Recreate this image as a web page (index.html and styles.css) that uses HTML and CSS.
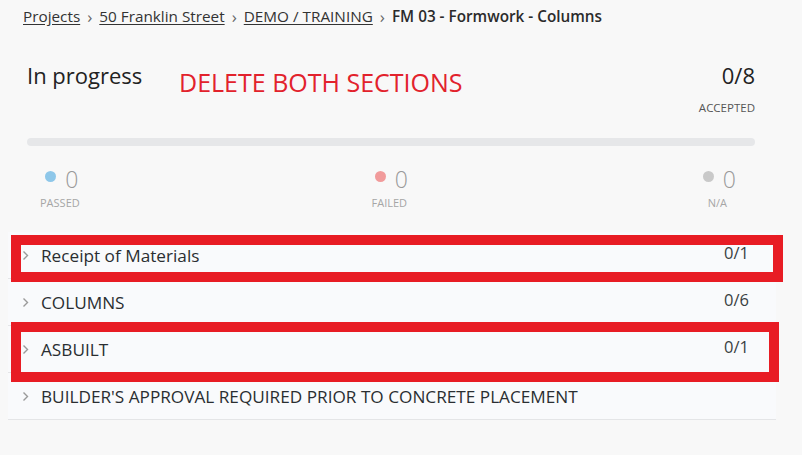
FILE: index.html
```html
<!DOCTYPE html>
<html>
<head>
<meta charset="utf-8">
<link rel="stylesheet" href="styles.css">
</head>
<body>
<nav class="crumbs">
  <a class="crumb" href="#">Projects</a><span class="sep">&rsaquo;</span>
  <a class="crumb" href="#">50 Franklin Street</a><span class="sep">&rsaquo;</span>
  <a class="crumb" href="#">DEMO / TRAINING</a><span class="sep">&rsaquo;</span>
  <span class="crumb-current">FM 03 - Formwork - Columns</span>
</nav>
<main class="panel">
  <section class="summary">
    <div class="summary-top">
      <div class="status">In progress</div>
      <div class="note">DELETE BOTH SECTIONS</div>
      <div class="accepted">
        <div class="accepted-count">0/8</div>
        <div class="accepted-label">ACCEPTED</div>
      </div>
    </div>
    <div class="progress"></div>
    <div class="stats">
      <div class="stat">
        <div class="stat-row"><span class="dot dot-pass"></span><span class="stat-num">0</span></div>
        <div class="stat-label">PASSED</div>
      </div>
      <div class="stat">
        <div class="stat-row"><span class="dot dot-fail"></span><span class="stat-num">0</span></div>
        <div class="stat-label">FAILED</div>
      </div>
      <div class="stat">
        <div class="stat-row"><span class="dot dot-na"></span><span class="stat-num">0</span></div>
        <div class="stat-label">N/A</div>
      </div>
    </div>
  </section>
  <div class="sections-wrap">
    <ul class="sections">
      <li class="row">
        <svg class="chev" width="7" height="11" viewBox="0 0 7 11"><path d="M1.5 1.5l4 4-4 4" fill="none" stroke="#9a9a9a" stroke-width="1.4"/></svg>
        <span class="row-title">Receipt of Materials</span>
        <span class="row-count">0/1</span>
      </li>
      <li class="row">
        <svg class="chev" width="7" height="11" viewBox="0 0 7 11"><path d="M1.5 1.5l4 4-4 4" fill="none" stroke="#9a9a9a" stroke-width="1.4"/></svg>
        <span class="row-title">COLUMNS</span>
        <span class="row-count">0/6</span>
      </li>
      <li class="row">
        <svg class="chev" width="7" height="11" viewBox="0 0 7 11"><path d="M1.5 1.5l4 4-4 4" fill="none" stroke="#9a9a9a" stroke-width="1.4"/></svg>
        <span class="row-title">ASBUILT</span>
        <span class="row-count">0/1</span>
      </li>
      <li class="row">
        <svg class="chev" width="7" height="11" viewBox="0 0 7 11"><path d="M1.5 1.5l4 4-4 4" fill="none" stroke="#9a9a9a" stroke-width="1.4"/></svg>
        <span class="row-title">BUILDER'S APPROVAL REQUIRED PRIOR TO CONCRETE PLACEMENT</span>
        <span class="row-count"></span>
      </li>
    </ul>
    <div class="mark mark-one"></div>
    <div class="mark mark-two"></div>
  </div>
</main>
</body>
</html>
```
FILE: styles.css
```css
* { box-sizing: border-box; }
html, body { margin: 0; padding: 0; }
body {
  background: #f8f8f8;
  font-family: "Open Sans", "Noto Sans", sans-serif;
  color: #252a2e;
  width: 802px;
  height: 455px;
  overflow: hidden;
}
.crumbs {
  display: flex;
  align-items: center;
  padding: 4px 0 0 23px;
  height: 28px;
  font-size: 15.3px;
  color: #333;
  white-space: nowrap;
}
.crumb { color: #333; text-decoration: underline; text-underline-offset: 2px; }
.sep { color: #666; margin: 0 7px; font-size: 17px; }
.crumb-current { font-weight: 600; color: #2b2b2b; }

.panel { margin-left: 8px; width: 768px; }
.summary { padding: 32px 21px 0 19px; }
.summary-top { display: flex; align-items: flex-start; height: 78px; }
.status { font-size: 22px; line-height: 30px; color: #222; width: 152px; }
.note { font-size: 25px; line-height: 30px; color: #e2222c; margin-top: 7px; flex: 1; }
.accepted { text-align: right; }
.accepted-count { font-size: 22px; line-height: 30px; color: #222; }
.accepted-label { font-size: 11.5px; line-height: 16px; color: #555; margin-top: 10px; }

.progress { height: 8px; border-radius: 4px; background: #e6e7e9; }

.stats { display: flex; justify-content: space-between; padding: 19px 19px 0 17px; height: 86px; }
.stat { display: flex; flex-direction: column; align-items: center; }
.stat-row { display: flex; align-items: flex-start; }
.dot { width: 11px; height: 11px; border-radius: 50%; margin-top: 6px; margin-right: 9px; }
.dot-pass { background: #8ec7e9; }
.dot-fail { background: #f19b9b; }
.dot-na { background: #c9c9c9; }
.stat-num { font-size: 23px; line-height: 28px; color: #9a9a9a; font-weight: 300; }
.stat-label { font-size: 11px; line-height: 14px; color: #a6a6a6; margin-top: 3px; margin-left: -4px; }

.sections-wrap { position: relative; }
.sections { list-style: none; margin: 0; padding: 0; background: #f9fafc; }
.row {
  display: flex;
  align-items: center;
  height: 47px;
  padding: 0 27px 0 14px;
  border-bottom: 1px solid #e4e5e7;
  font-size: 17.2px;
  color: #2a2e31;
}
.chev { margin-right: 12px; margin-top: 0; flex: none; }
.row-title { flex: 1; white-space: nowrap; }
.row-count { font-size: 16.5px; color: #3a3f42; margin-top: -6px; }

.mark { position: absolute; border: 10px solid #e81c24; pointer-events: none; }
.mark-one { left: 3px; top: 3px; width: 772px; height: 47px; }
.mark-two { left: 3px; top: 90px; width: 768px; height: 60px; }
```
